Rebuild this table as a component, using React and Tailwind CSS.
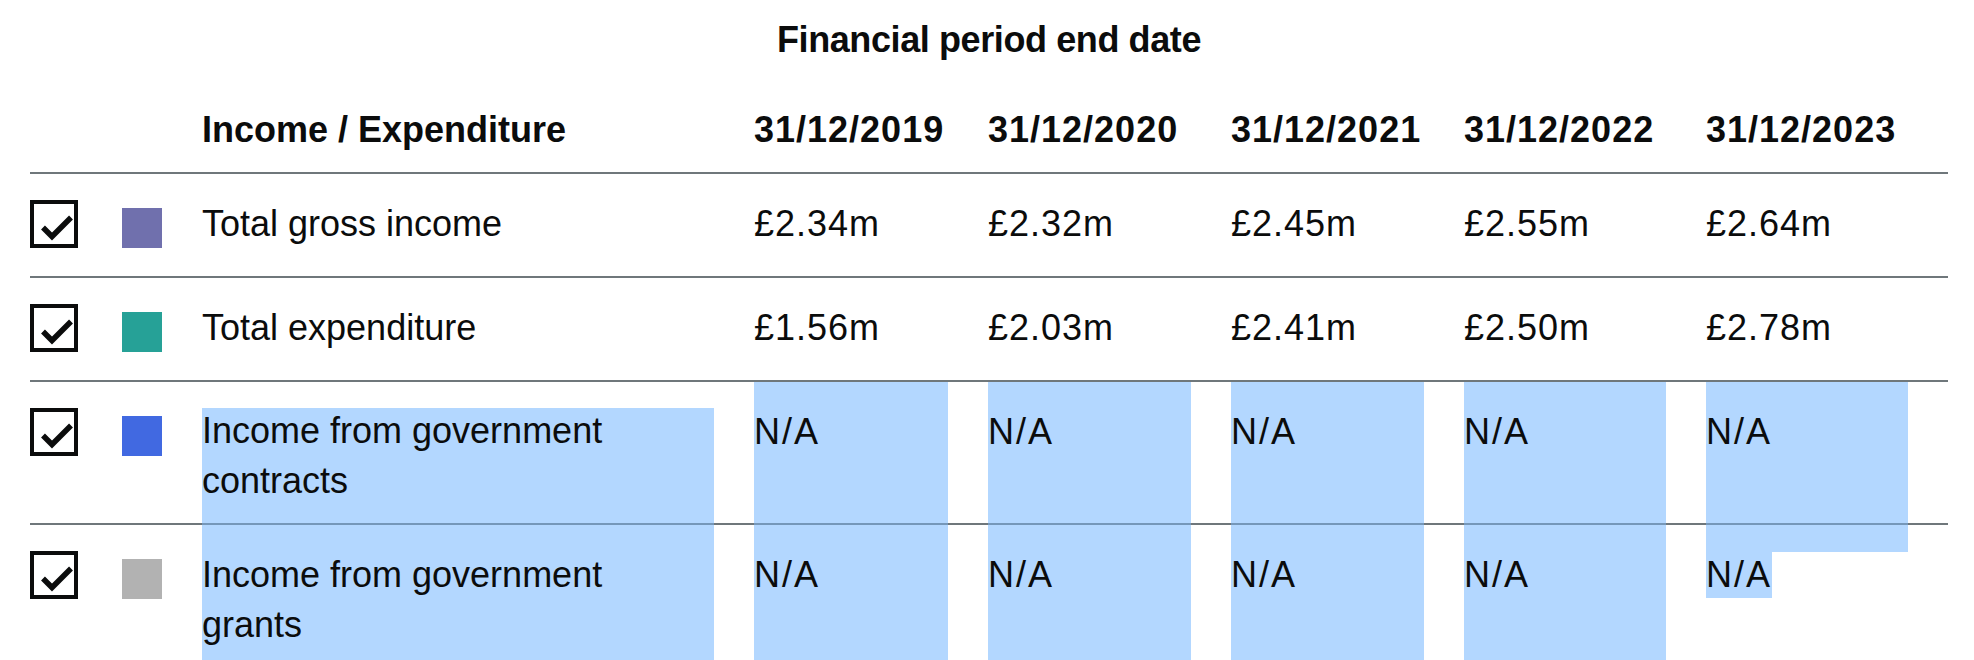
import React from 'react';

const dates = ['31/12/2019', '31/12/2020', '31/12/2021', '31/12/2022', '31/12/2023'];

const rows = [
  { label: 'Total gross income', swatch: 'bg-[#7070ad]', values: ['£2.34m', '£2.32m', '£2.45m', '£2.55m', '£2.64m'] },
  { label: 'Total expenditure', swatch: 'bg-[#26a197]', values: ['£1.56m', '£2.03m', '£2.41m', '£2.50m', '£2.78m'] },
  { label: 'Income from government contracts', swatch: 'bg-[#4169e1]', values: ['N/A', 'N/A', 'N/A', 'N/A', 'N/A'], selected: 'start' },
  { label: 'Income from government grants', swatch: 'bg-[#b2b2b2]', values: ['N/A', 'N/A', 'N/A', 'N/A', 'N/A'], selected: 'end' },
];

const grid =
  'grid grid-cols-[52px_40px_512px_194px_203px_193px_202px_202px] gap-x-[40px] pr-[40px] border-b-2 border-[#6f777b]';

// selection look: light blue block, border blended where it runs over the rule
const sel = 'bg-[#b3d7ff] -mb-[2px] border-b-2 border-[#7597b9]';

const Checkbox = () => (
  <div className="w-[48px] h-[48px] border-4 border-[#0b0c0c] bg-white">
    <svg viewBox="0 0 40 40" className="w-full h-full">
      <polyline points="9,23.5 18,32.5 37,13.5" fill="none" stroke="#0b0c0c" strokeWidth="5.5" strokeLinejoin="miter" />
    </svg>
  </div>
);

const Value = ({ text }) => {
  const isNA = text === 'N/A';
  return <span className={isNA ? 'tracking-[2px]' : 'tracking-[1px]'}>{text}</span>;
};

const DataRow = ({ row }) => {
  const twoLine = row.selected != null;
  return (
    <div className={`${grid} ${twoLine ? 'h-[143px]' : 'h-[104px]'}`}>
      <div className="pt-[26px]">
        <Checkbox />
      </div>
      <div className="pt-[34px]">
        <div className={`w-[40px] h-[40px] ${row.swatch}`} />
      </div>

      {row.selected === 'start' && (
        <div className={`mt-[26px] ${sel}`}>
          <p className="-mt-[2px] max-w-[470px]">{row.label}</p>
        </div>
      )}
      {row.selected === 'end' && (
        <div className={`pt-[25px] ${sel}`}>
          <p className="max-w-[470px]">{row.label}</p>
        </div>
      )}
      {!row.selected && (
        <div className="pt-[25px]">
          <p className="max-w-[470px]">{row.label}</p>
        </div>
      )}

      {row.values.map((v, i) => {
        if (row.selected === 'end' && i === row.values.length - 1) {
          return (
            <div key={i} className="flex flex-col items-start">
              <div className="h-[27px] w-full bg-[#b3d7ff]" />
              <div className="leading-[46px] bg-[#b3d7ff]">
                <Value text={v} />
              </div>
            </div>
          );
        }
        return (
          <div key={i} className={`pt-[25px] ${row.selected ? sel : ''}`}>
            <Value text={v} />
          </div>
        );
      })}
    </div>
  );
};

export default function App() {
  return (
    <div className="min-h-screen bg-white text-[#0b0c0c] font-['Liberation_Sans',Arial,sans-serif] text-[36px] leading-[50px] overflow-hidden">
      <div className="ml-[30px] w-[1918px]">
        <div className="pt-[15px] text-center font-bold tracking-[-0.4px]">Financial period end date</div>

        <div className={`${grid} h-[109px] font-bold`}>
          <div />
          <div />
          <div className="pt-[40px]">Income / Expenditure</div>
          {dates.map((d) => (
            <div key={d} className="pt-[40px] tracking-[1px] whitespace-nowrap">
              {d}
            </div>
          ))}
        </div>

        {rows.map((r) => (
          <DataRow key={r.label} row={r} />
        ))}
      </div>
    </div>
  );
}
